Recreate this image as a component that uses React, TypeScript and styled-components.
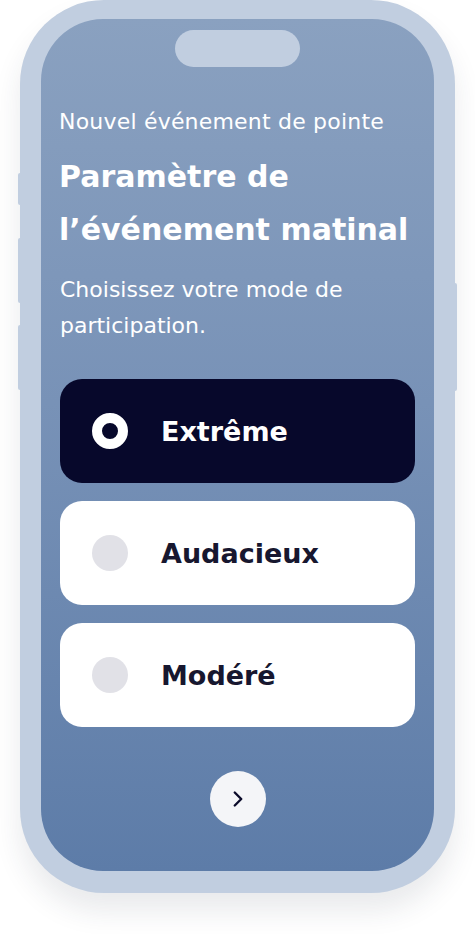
import React, { useState } from 'react';
import styled, { createGlobalStyle } from 'styled-components';
import { ChevronRight } from 'lucide-react';

const GlobalStyle = createGlobalStyle`
  body {
    margin: 0;
    background: #ffffff;
    font-family: 'DejaVu Sans', 'Noto Sans', sans-serif;
  }
`;

const modes = ['Extrême', 'Audacieux', 'Modéré'];

const sideButtons = [
  { side: 'left' as const, top: 173, height: 32 },
  { side: 'left' as const, top: 238, height: 65 },
  { side: 'left' as const, top: 325, height: 65 },
  { side: 'right' as const, top: 283, height: 108 },
];

const App = () => {
  const [selected, setSelected] = useState(0);
  return (
    <>
      <GlobalStyle />
      <Page>
        <Phone>
          {sideButtons.map((b) => (
            <SideButton key={b.top} $side={b.side} $top={b.top} $height={b.height} />
          ))}
          <Screen>
            <Notch />
            <Eyebrow>Nouvel événement de pointe</Eyebrow>
            <Title>
              Paramètre de
              <br />
              l’événement matinal
            </Title>
            <Subtitle>
              Choisissez votre mode de
              <br />
              participation.
            </Subtitle>
            <Options>
              {modes.map((mode, i) => (
                <Option
                  key={mode}
                  $active={selected === i}
                  onClick={() => setSelected(i)}
                >
                  <Radio $active={selected === i} />
                  <OptionLabel>{mode}</OptionLabel>
                </Option>
              ))}
            </Options>
            <NextButton aria-label="Suivant">
              <ChevronRight size={26} strokeWidth={2.2} color="#0b0b2a" />
            </NextButton>
          </Screen>
        </Phone>
      </Page>
    </>
  );
};

const Page = styled.div`
  width: 475px;
  height: 934px;
  padding-left: 20px;
  box-sizing: border-box;
`;

const Phone = styled.div`
  position: relative;
  width: 435px;
  height: 893px;
  box-sizing: border-box;
  padding: 19px 21px 22px 21px;
  border-radius: 84px;
  background: #c1cee0;
  box-shadow: 0 18px 28px rgba(40, 50, 70, 0.1);
`;

// the hardware buttons stick out of the frame edge
const SideButton = styled.span<{ $side: 'left' | 'right'; $top: number; $height: number }>`
  position: absolute;
  top: ${(p) => p.$top}px;
  ${(p) => (p.$side === 'left' ? 'left: -2px;' : 'right: -2px;')}
  width: 4px;
  height: ${(p) => p.$height}px;
  border-radius: 2px;
  background: #c1cee0;
`;

const Screen = styled.div`
  height: 100%;
  box-sizing: border-box;
  border-radius: 62px;
  background: linear-gradient(180deg, #8aa1c0 0%, #7892b7 45%, #5d7ca8 100%);
  padding: 11px 19px 0 19px;
  display: flex;
  flex-direction: column;
`;

const Notch = styled.div`
  align-self: center;
  width: 125px;
  height: 37px;
  border-radius: 19px;
  background: #c1cee0;
`;

const Eyebrow = styled.p`
  margin: 41px 0 0 -1px;
  font-size: 22px;
  line-height: 28px;
  font-weight: 400;
  color: #ffffff;
  letter-spacing: 0.2px;
`;

const Title = styled.h1`
  margin: 14px 0 0 -1px;
  font-size: 30px;
  line-height: 53px;
  font-weight: 700;
  color: #ffffff;
`;

const Subtitle = styled.p`
  margin: 16px 0 0 0;
  font-size: 22px;
  line-height: 36px;
  font-weight: 400;
  color: #ffffff;
`;

const Options = styled.div`
  margin-top: 35px;
  display: flex;
  flex-direction: column;
  gap: 18px;
`;

const Option = styled.div<{ $active: boolean }>`
  height: 104px;
  box-sizing: border-box;
  border-radius: 22px;
  padding-left: 32px;
  display: flex;
  align-items: center;
  gap: 33px;
  cursor: pointer;
  background: ${(p) => (p.$active ? '#07082b' : '#ffffff')};
  color: ${(p) => (p.$active ? '#ffffff' : '#17172f')};
`;

const Radio = styled.span<{ $active: boolean }>`
  width: 36px;
  height: 36px;
  border-radius: 50%;
  box-sizing: border-box;
  flex-shrink: 0;
  background: ${(p) => (p.$active ? '#07082b' : '#e1e1e7')};
  border: ${(p) => (p.$active ? '10.5px solid #ffffff' : 'none')};
`;

const OptionLabel = styled.span`
  font-size: 27px;
  font-weight: 700;
`;

const NextButton = styled.button`
  align-self: center;
  margin-top: 44px;
  width: 56px;
  height: 56px;
  border-radius: 50%;
  border: none;
  background: #f4f5f8;
  display: flex;
  align-items: center;
  justify-content: center;
  padding: 0;
  cursor: pointer;
`;

export default App;
